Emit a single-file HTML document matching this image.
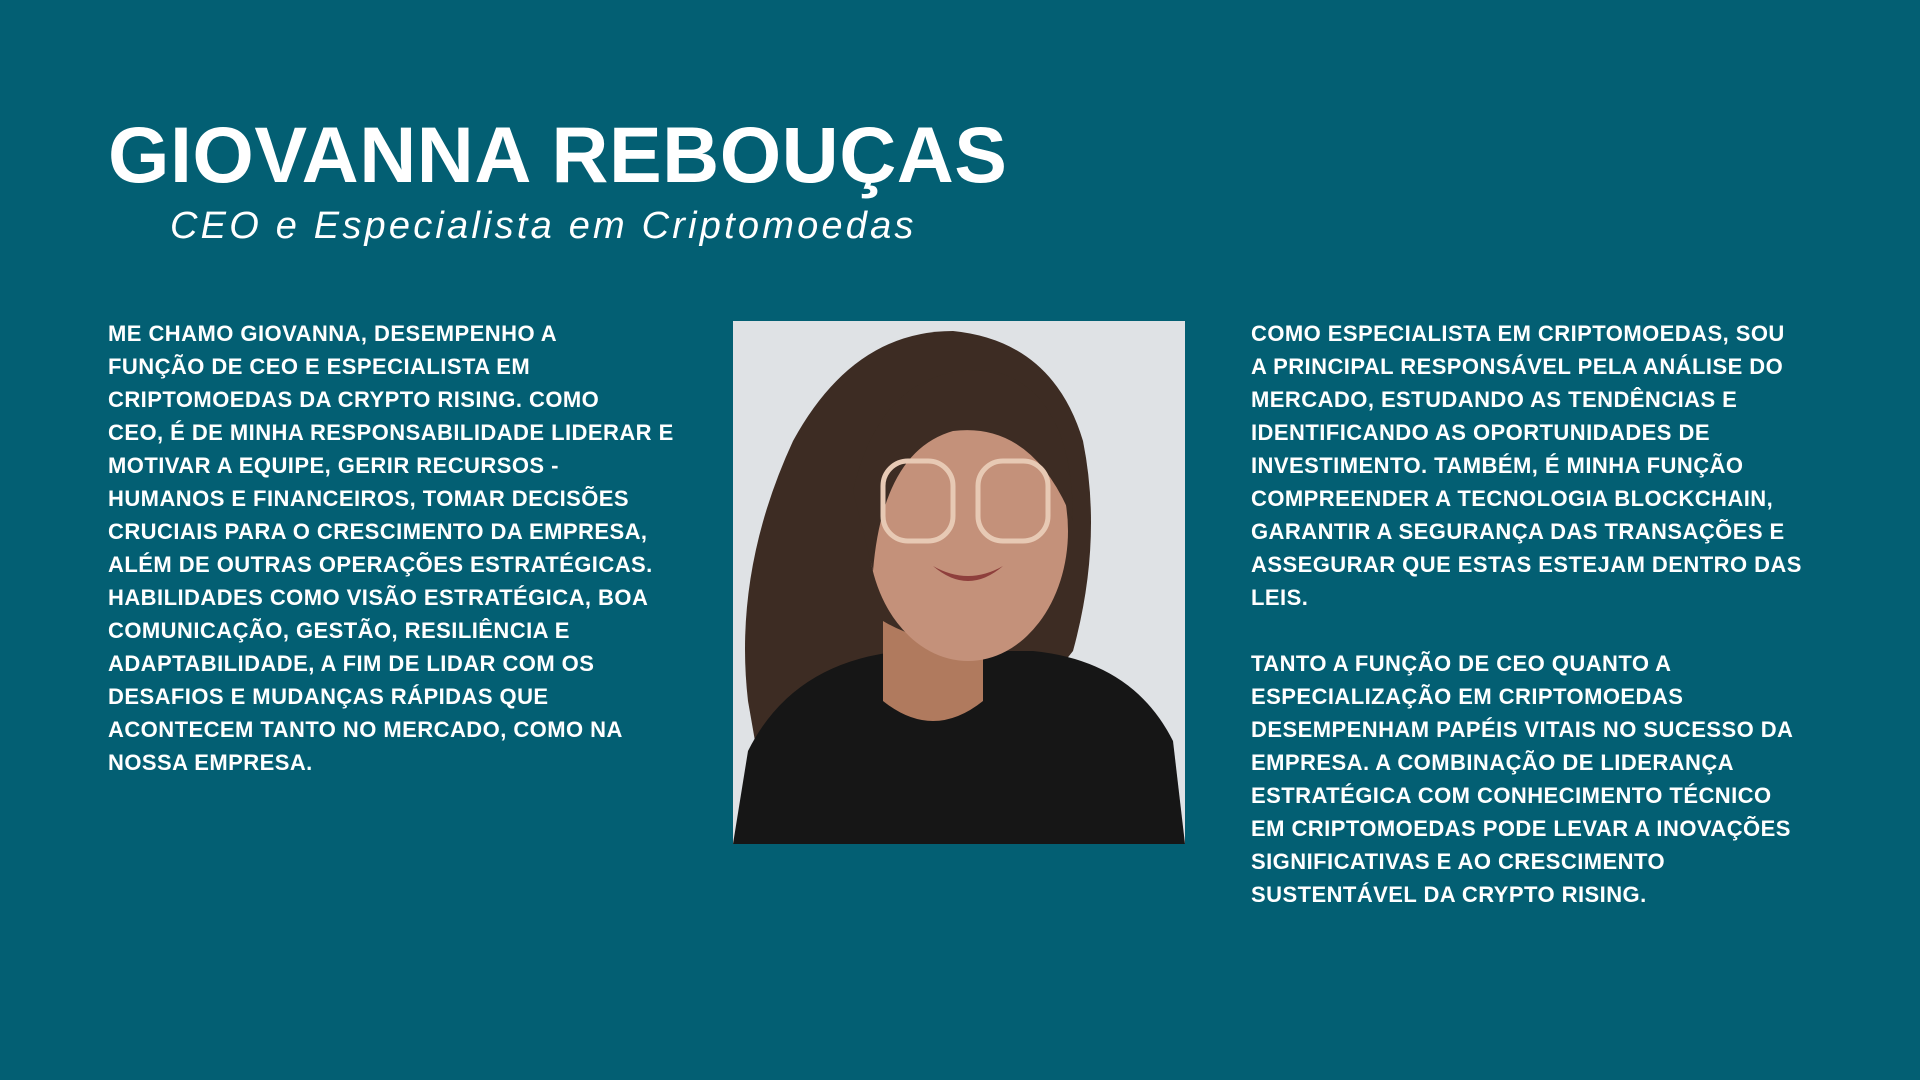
<!DOCTYPE html>
<html><head><meta charset="utf-8"><style>
html,body{margin:0;padding:0}
body{width:1920px;height:1080px;background:#035f73;position:relative;overflow:hidden;font-family:"Liberation Sans",Arial,sans-serif;color:#fff}
.t{position:absolute;left:108px;top:115px;font-size:79px;line-height:79px;font-weight:bold;white-space:nowrap;letter-spacing:0.5px}
.s{position:absolute;left:170px;top:207px;font-size:38px;line-height:38px;font-style:italic;letter-spacing:3.2px;white-space:nowrap}
.p{position:absolute;font-size:22px;line-height:33px;font-weight:bold;white-space:nowrap;letter-spacing:0.45px}
.ph{position:absolute;left:733px;top:321px;width:452px;height:523px;overflow:hidden}
</style></head><body>
<div class="t">GIOVANNA REBOUÇAS</div>
<div class="s">CEO e Especialista em Criptomoedas</div>
<div class="p" style="left:108px;top:317px"> ME CHAMO GIOVANNA, DESEMPENHO A<br>FUNÇÃO DE CEO E ESPECIALISTA EM<br>CRIPTOMOEDAS DA CRYPTO RISING. COMO<br>CEO, É DE MINHA RESPONSABILIDADE LIDERAR E<br>MOTIVAR A EQUIPE, GERIR RECURSOS -<br>HUMANOS E FINANCEIROS, TOMAR DECISÕES<br>CRUCIAIS PARA O CRESCIMENTO DA EMPRESA,<br>ALÉM DE OUTRAS OPERAÇÕES ESTRATÉGICAS.<br>HABILIDADES COMO VISÃO ESTRATÉGICA, BOA<br>COMUNICAÇÃO, GESTÃO, RESILIÊNCIA E<br>ADAPTABILIDADE, A FIM DE LIDAR COM OS<br>DESAFIOS E MUDANÇAS RÁPIDAS QUE<br>ACONTECEM TANTO NO MERCADO, COMO NA<br>NOSSA EMPRESA.</div>
<div class="p" style="left:1251px;top:317px"> COMO ESPECIALISTA EM CRIPTOMOEDAS, SOU<br>A PRINCIPAL RESPONSÁVEL PELA ANÁLISE DO<br>MERCADO, ESTUDANDO AS TENDÊNCIAS E<br>IDENTIFICANDO AS OPORTUNIDADES DE<br>INVESTIMENTO. TAMBÉM, É MINHA FUNÇÃO<br>COMPREENDER A TECNOLOGIA BLOCKCHAIN,<br>GARANTIR A SEGURANÇA DAS TRANSAÇÕES E<br>ASSEGURAR QUE ESTAS ESTEJAM DENTRO DAS<br>LEIS.</div>
<div class="p" style="left:1251px;top:647px"> TANTO A FUNÇÃO DE CEO QUANTO A<br>ESPECIALIZAÇÃO EM CRIPTOMOEDAS<br>DESEMPENHAM PAPÉIS VITAIS NO SUCESSO DA<br>EMPRESA. A COMBINAÇÃO DE LIDERANÇA<br>ESTRATÉGICA COM CONHECIMENTO TÉCNICO<br>EM CRIPTOMOEDAS PODE LEVAR A INOVAÇÕES<br>SIGNIFICATIVAS E AO CRESCIMENTO<br>SUSTENTÁVEL DA CRYPTO RISING.</div>
<div class="ph"><svg width="452" height="523" viewBox="0 0 452 523">
<rect width="452" height="523" fill="#dfe2e5"/>
<path d="M40 523 L15 380 Q0 250 60 120 Q120 10 220 10 Q320 20 350 120 Q370 220 340 330 L300 380 L110 523Z" fill="#3d2c23"/>
<path d="M0 523 L15 430 Q60 340 170 330 L300 330 Q400 340 440 420 L452 523Z" fill="#161616"/>
<path d="M150 300 Q200 330 250 310 L250 380 Q200 420 150 380Z" fill="#b07a5e"/>
<ellipse cx="235" cy="210" rx="100" ry="130" fill="#c4917a"/>
<path d="M120 170 Q150 40 260 50 Q340 70 340 200 Q300 100 220 110 Q150 130 140 250Z" fill="#3d2c23"/>
<rect x="150" y="140" width="70" height="80" rx="25" fill="none" stroke="#e7c9b4" stroke-width="5"/>
<rect x="245" y="140" width="70" height="80" rx="25" fill="none" stroke="#e7c9b4" stroke-width="5"/>
<path d="M200 245 Q235 265 270 245 Q235 275 200 245Z" fill="#8e3f3c"/>
</svg></div>
</body></html>
